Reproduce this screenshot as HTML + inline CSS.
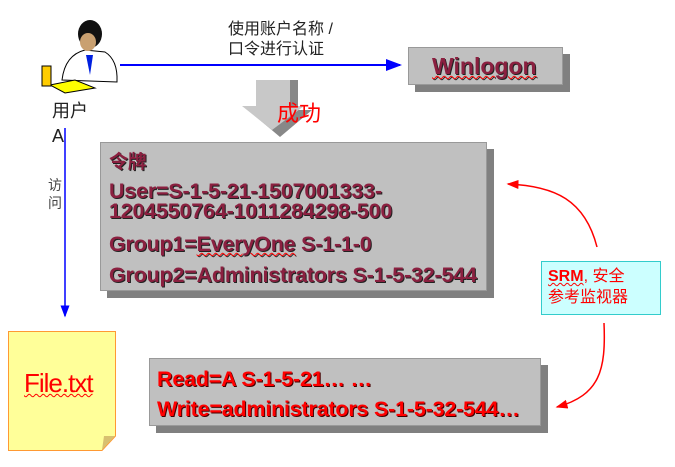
<!DOCTYPE html>
<html><head><meta charset="utf-8"><style>
body{margin:0;width:675px;height:467px;background:#fff;position:relative;overflow:hidden;font-family:"Liberation Sans","Noto Sans CJK SC",sans-serif}
.a{position:absolute;white-space:nowrap}
.box{position:absolute;background:#c0c0c0;border:1px solid #999;box-shadow:7px 7px 0 #808080}
.t{color:#8b2040;font-weight:bold;font-size:21.5px;letter-spacing:-0.2px;text-shadow:1px 1px 0 #222}
.r{color:#f00;font-weight:bold;font-size:21.5px;letter-spacing:-0.2px;text-shadow:1px 1px 0 #400}
.sq{text-decoration:underline wavy #f00;text-decoration-thickness:1px}
</style></head><body>
<svg class="a" style="left:0;top:0" width="675" height="467">
<defs><marker id="b" markerWidth="8" markerHeight="8" refX="7" refY="4" orient="auto"><path d="M0,1 L8,4 L0,7Z" fill="#00f"/></marker>
<marker id="rr" markerWidth="8" markerHeight="8" refX="7" refY="4" orient="auto"><path d="M0,1 L8,4 L0,7Z" fill="#f00"/></marker></defs>
<line x1="120" y1="65" x2="400" y2="65" stroke="#00f" stroke-width="2" marker-end="url(#b)"/>
<line x1="65" y1="128" x2="65" y2="316" stroke="#00f" stroke-width="1.5" marker-end="url(#b)"/>
<path d="M597,247 C585,200 555,186 508,184" stroke="#f00" stroke-width="1.5" fill="none" marker-end="url(#rr)"/>
<path d="M604,323 C606,370 600,395 557,407" stroke="#f00" stroke-width="1.5" fill="none" marker-end="url(#rr)"/>
<polygon points="263,80 298,80 298,110 312,110 280,137 248,110 263,110" fill="#888"/>
<polygon points="256,80 290,80 290,106 304,106 272,130 242,106 256,106" fill="#c8c8c8"/>
<path d="M62,80 Q65,55 85,50 L105,52 Q118,60 117,82 Z" fill="#fff" stroke="#000"/>
<ellipse cx="90" cy="34" rx="12" ry="14" fill="#111"/>
<ellipse cx="88" cy="42" rx="8" ry="9" fill="#c9a070"/>
<path d="M86,55 L90,75 L93,55Z" fill="#0020e0"/>
<path d="M50,85 L75,80 L95,88 L65,93Z" fill="#ffff00" stroke="#000"/>
<rect x="42" y="66" width="9" height="20" fill="#ffcc00" stroke="#000"/>
<path d="M8.5,331.5 H115.5 V436 L102,450.5 H8.5 Z" fill="#ffff99" stroke="#ff9933"/>
<path d="M102,450 L104,436 L115,436Z" fill="#d8c070"/>
</svg>
<div class="a" style="left:228px;top:20px;font-size:16px;line-height:20px;color:#222">使用账户名称 /<br>口令进行认证</div>
<div class="box" style="left:408px;top:47px;width:153px;height:36px"></div>
<div class="a t sq" style="left:432px;top:53px;font-size:23px;letter-spacing:0">Winlogon</div>
<div class="a" style="left:277px;top:96px;font-size:22px;color:#f00">成功</div>
<div class="a" style="left:52px;top:97px;font-size:18px;color:#222">用户</div>
<div class="a" style="left:52px;top:126px;font-size:18px;color:#222">A</div>
<div class="a" style="left:48px;top:176px;font-size:14px;line-height:18px;color:#444">访<br>问</div>
<div class="box" style="left:100px;top:142px;width:385px;height:147px"></div>
<div class="a t" style="left:109px;top:147px;font-size:19px">令牌</div>
<div class="a t" style="left:109px;top:181px;line-height:20px">User=S-1-5-21-1507001333-<br>1204550764-1011284298-500</div>
<div class="a t" style="left:109px;top:232px">Group1=<span class="sq">EveryOne</span> S-1-1-0</div>
<div class="a t" style="left:109px;top:263px">Group2=Administrators S-1-5-32-544</div>
<div class="a" style="left:541px;top:261px;width:118px;height:52px;background:#ccffff;border:1px solid #33cccc"></div>
<div class="a" style="left:548px;top:266px;font-size:16px;line-height:21px;color:#f00"><span class="sq" style="font-weight:bold">SRM</span>, 安全<br>参考监视器</div>
<div class="a" style="left:24px;top:368px;font-size:26px;color:#f00;letter-spacing:-1px"><span class="sq">File.txt</span></div>
<div class="box" style="left:149px;top:358px;width:390px;height:66px"></div>
<div class="a r" style="left:157px;top:367px">Read=A S-1-5-21… …</div>
<div class="a r" style="left:157px;top:397px">Write=administrators S-1-5-32-544…</div>
</body></html>
